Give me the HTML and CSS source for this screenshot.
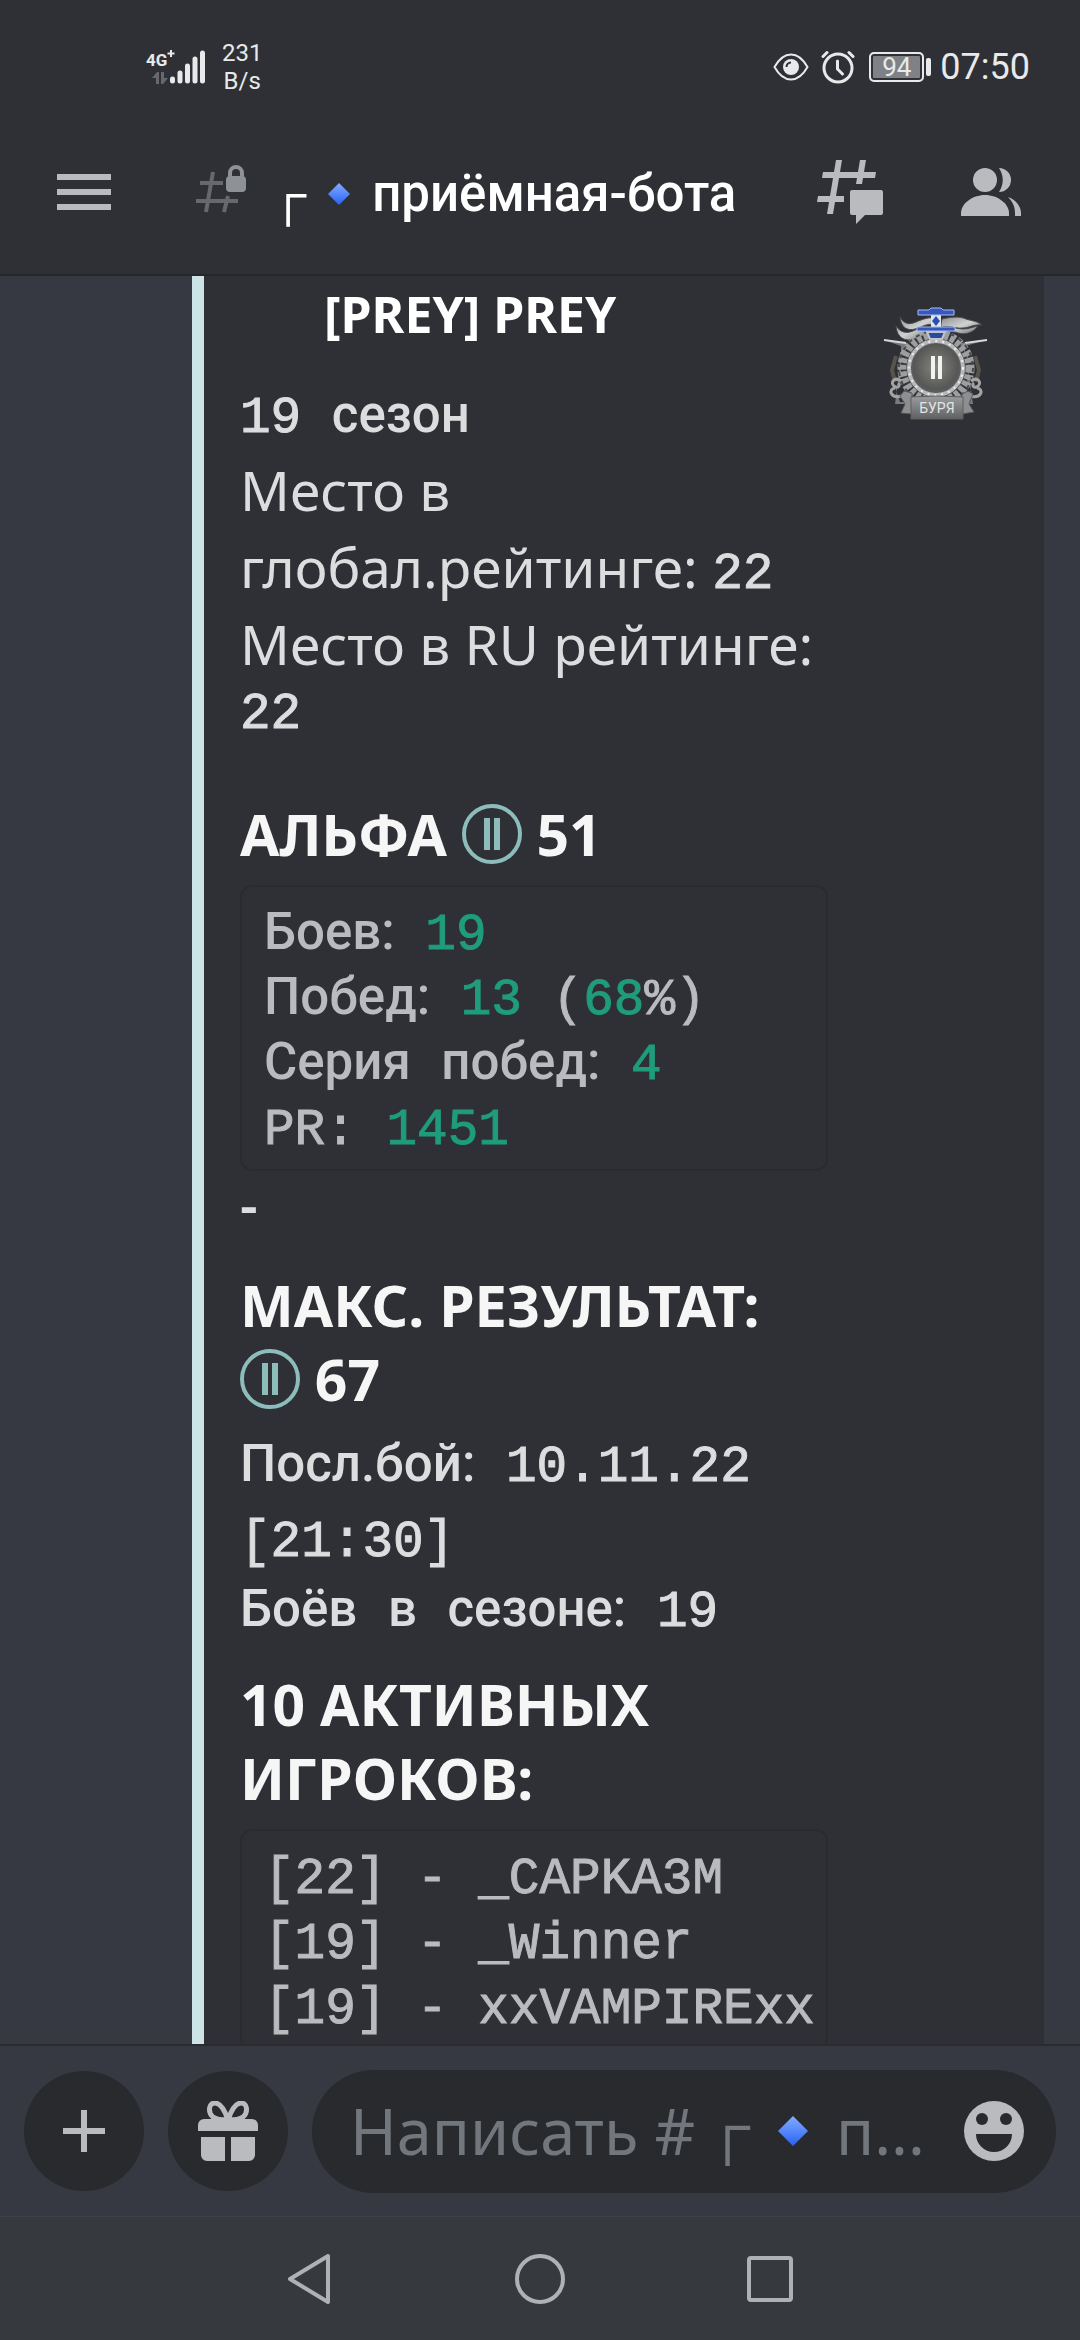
FILE: index.html
```html
<!DOCTYPE html>
<html lang="ru">
<head>
  <meta charset="UTF-8">
  <meta name="viewport" content="width=device-width, initial-scale=1">
  <title>приёмная-бота</title>
  <link rel="stylesheet" href="styles.css">
</head>
<body>

  <!-- STATUS BAR -->
  <div class="status-bar">
    <svg class="signal" viewBox="0 0 60 36" width="60" height="36">
      <text class="signal-net" x="0" y="17">4G</text>
      <path d="M25 1v7M21.500 4.500h7" stroke="#e8e9ea" stroke-width="2"/>
      <path d="M6 29l5-6h2v12h-3v-6zM15 23h3v6h4l-5 6h-2z" fill="#66686d"/>
      <g stroke="#e8e9ea" stroke-width="5" stroke-linecap="round">
        <path d="M26.500 30v2M34 24v8M41.500 17v15M49 10v22M56.500 4v28"/>
      </g>
    </svg>
    <div class="net-speed">231<br>B/s</div>
    <div class="status-right">
      <svg viewBox="0 0 36 28" width="36" height="28" fill="none">
        <path d="M1.500 14C6 6 12 1.500 18 1.500S30 6 34.500 14C30 22 24 26.500 18 26.500S6 22 1.500 14z" stroke="#e8e9ea" stroke-width="2"/>
        <circle cx="18" cy="14" r="8" fill="#e8e9ea"/>
        <path d="M13.500 14a4.500 4.500 0 0 1 4.500-4.500" stroke="#2f3035" stroke-width="2"/>
      </svg>
      <svg class="alarm" viewBox="0 0 34 34" width="34" height="34" fill="none" stroke="#e8e9ea" stroke-linecap="round">
        <circle cx="17" cy="18" r="14" stroke-width="3"/>
        <path d="M16.500 11v8l5 5" stroke-width="3"/>
        <path d="M2 6.500l4-4M28 2.500l4 4" stroke-width="3"/>
      </svg>
      <div class="battery">94</div>
      <time class="clock">07:50</time>
    </div>
  </div>

  <!-- CHANNEL HEADER -->
  <header class="toolbar">
    <button class="icon-btn" type="button" aria-label="Меню">
      <svg viewBox="0 0 54 36" width="54" height="36" fill="#b9bbbf">
        <path d="M0 0h54v6H0zM0 15h54v6H0zM0 30h54v6H0z"/>
      </svg>
    </button>
    <svg class="channel-icon" viewBox="0 0 50 54" width="50" height="54">
      <path d="M4 18h23M0 36h42M17 7l-7 40M32 31l-4 16" stroke="#66686d" stroke-width="4" fill="none"/>
      <path d="M34 12V8a6 6 0 0 1 12 0v4" stroke="#8e9196" stroke-width="4" fill="none"/>
      <rect x="30" y="11" width="20" height="16" rx="4" fill="#8e9196"/>
    </svg>
    <h1 class="channel-name">
      <span>┌</span>
      <svg class="diamond" viewBox="0 0 22 22"><path d="M11 0l11 11-11 11L0 11z" fill="url(#blue)"/></svg>
      <span>приёмная-бота</span>
    </h1>
    <button class="icon-btn" type="button" aria-label="Ветки">
      <svg viewBox="0 0 66 64" width="66" height="64" fill="#b9bbbf">
        <path d="M6 12h53l-1 6H5zM1 36h26v6H0zM19 0h6l-9 54h-6zM43 0h6l-4 24h-6z"/>
        <path d="M35 30h29a2 2 0 0 1 2 2v21a2 2 0 0 1-2 2H48l-9 9v-9h-4a2 2 0 0 1-2-2V32a2 2 0 0 1 2-2z"/>
      </svg>
    </button>
    <button class="icon-btn members-btn" type="button" aria-label="Участники">
      <svg viewBox="0 0 60 48" width="60" height="48" fill="#b9bbbf">
        <circle cx="24" cy="12" r="12"/>
        <path d="M0 48v-3c0-9 11-18 24-18s24 9 24 18v3z"/>
        <path d="M38 0a12 12 0 0 1 0 24c5-8 5-16 0-24zM47 29c8 3 13 9 13 16v3h-6v-3c0-6-2-11-7-16z"/>
      </svg>
    </button>
  </header>

  <!-- MESSAGES -->
  <main class="messages">
    <article class="embed">
      <div class="embed-body">
        <h2 class="embed-title">[PREY] PREY</h2>

        <div class="mono-line">19 <span class="ru">сезон</span></div>
        <div class="text-line">Место в глобал.рейтинге: <span class="mono">22</span></div>
        <div class="text-line">Место в RU рейтинге:</div>
        <div class="mono-line">22</div>

        <h3 class="field-title alpha-title">АЛЬФА
          <svg class="league" viewBox="0 0 60 60"><use href="#league-two"/></svg>
          51</h3>
        <pre class="code"><span class="ru">Боев:</span> <b>19</b>
<span class="ru">Побед:</span> <b>13</b> (<b>68</b>%)
<span class="ru">Серия</span> <span class="ru">побед:</span> <b>4</b>
PR: <b>1451</b></pre>
        <div class="text-line dash">-</div>

        <h3 class="field-title max-title">МАКС. РЕЗУЛЬТАТ:<br>
          <svg class="league" viewBox="0 0 60 60"><use href="#league-two"/></svg>
          67</h3>
        <div class="mono-line tall"><span class="ru">Посл.бой:</span> 10.11.22<br>[21:30]</div>
        <div class="mono-line"><span class="ru">Боёв</span> <span class="ru">в</span> <span class="ru">сезоне:</span> 19</div>

        <h3 class="field-title players-title">10 АКТИВНЫХ ИГРОКОВ:</h3>
        <pre class="code">[22] - _CAPKA3M
[19] - _Winner
[19] - xxVAMPIRExx
</pre>
      </div>

      <!-- Clan league badge -->
      <svg class="badge" viewBox="0 0 150 150" width="150" height="150">
        <path d="M24 50l24 3-3 10-5-1-1 22-4 30h78l-4-30-1-22-5 1-3-10 27-3-22 6v30l6 14-4 12H40l-4-12 5-14V56z" fill="#77797b"/>
        <path d="M24 50l22 3M127 50l-22 3" stroke="#d5d7d8" stroke-width="2"/>
        <path d="M36 66l-4 14 3 12M115 66l4 14-3 12" stroke="#57534d" stroke-width="4" fill="none"/>
        <path d="M40 27c4 7 9 8 16 5s13-5 18-4v7c-7-2-12 2-19 4s-14-1-15-12zM36 36c4 6 10 8 17 5 8-4 15-4 21-1v6c-8-2-13 0-20 3-9 3-17-1-18-13z" fill="url(#steel)" stroke="#494b4d"/>
        <path d="M82 29c9-2 17-3 24 0 6 2 11 2 16 6-8-1-13 3-19 3-8 1-14-3-22 0v-4zM82 37c8-2 14 2 21 2 6 0 9-2 15-3-5 7-13 9-20 7-6-2-11-3-17 1z" fill="url(#steel)" stroke="#494b4d"/>
        <circle cx="76" cy="78" r="33" fill="#3d3e40"/>
        <circle cx="76" cy="78" r="34" fill="none" stroke="#9c9e9f" stroke-width="9" stroke-dasharray="5 2"/>
        <circle cx="76" cy="78" r="37" fill="none" stroke="#47494b" stroke-width="2" stroke-dasharray="4 5"/>
        <circle cx="76" cy="78" r="27" fill="#595b5c" stroke="#b6b8b9" stroke-width="4"/>
        <circle cx="76" cy="78" r="27" fill="none" stroke="#eceded" stroke-width="2" stroke-dasharray="2 5"/>
        <circle cx="76" cy="77" r="23" fill="url(#dial)"/>
        <path d="M71 66h4v23h-4zM78 66h4v23h-4z" fill="#f3f3ee"/>
        <g fill="none" stroke="#a1a3a4" stroke-width="3">
          <path d="M41 91c-7-5-11 2-7 5s7-1 4-3M42 106c-12 3-14-7-7-8M111 91c7-5 11 2 7 5s-7-1-4-3M110 106c12 3 14-7 7-8"/>
        </g>
        <path d="M71 24h10v15H71z" fill="#e2e6ea"/>
        <path d="M76 26l4 5-4 5-4-5z" fill="#294fb2"/>
        <path d="M58 20h11l2-2h10l2 2h11v5H58zM57 37h38v4H57z" fill="#3657bd" stroke="#a9bcf0"/>
        <path d="M67 42h18l-3 7H70z" fill="#2d489f" stroke="#bfc4cb" stroke-width="2"/>
        <path d="M44 101l8 2v21l-11-1 4-9-5-8zM108 101l-6 3v20l12-2-5-8 4-10z" fill="#8c8e8f" stroke="#555759"/>
        <path d="M51 107q25-2 52 0v22H51z" fill="url(#plate)" stroke="#5d5f61"/>
        <text class="badge-text" x="77" y="123" text-anchor="middle">БУРЯ</text>
      </svg>
    </article>
  </main>

  <!-- COMPOSER -->
  <form class="composer">
    <button class="round-btn" type="button" aria-label="Прикрепить">
      <svg viewBox="0 0 42 42" width="42" height="42" fill="#b9bbbf"><path d="M18 0h6v18h18v6H24v18h-6V24H0v-6h18z"/></svg>
    </button>
    <button class="round-btn" type="button" aria-label="Подарок">
      <svg viewBox="0 0 60 60" width="60" height="60" fill="#b9bbbf">
        <path d="M30 19c-3-9-7-17-13-17-7 0-7 10-2 14 4 3 10 3 15 3zM30 19c3-9 7-17 13-17 7 0 7 10 2 14-4 3-10 3-15 3z" fill="none" stroke="#b9bbbf" stroke-width="5"/>
        <path d="M6 18h48a6 6 0 0 1 6 6v6H0v-6a6 6 0 0 1 6-6zM3 36h24v24H9a6 6 0 0 1-6-6zM33 36h24v18a6 6 0 0 1-6 6H33z"/>
      </svg>
    </button>
    <div class="field">
      <input id="message" type="text">
      <label class="placeholder" for="message">
        <span>Написать #</span>
        <span class="corner">┌</span>
        <svg class="diamond" viewBox="0 0 22 22"><path d="M11 0l11 11-11 11L0 11z" fill="url(#blue)"/></svg>
        <span>п...</span>
      </label>
      <button class="icon-btn" type="button" aria-label="Эмодзи">
        <svg viewBox="0 0 60 60" width="60" height="60">
          <circle cx="30" cy="30" r="30" fill="#b9bbbf"/>
          <g fill="#292a2e">
            <circle cx="18" cy="18" r="6"/>
            <circle cx="42" cy="18" r="6"/>
            <path d="M12 33h36a18 18 0 0 1-36 0z"/>
          </g>
        </svg>
      </button>
    </div>
  </form>

  <!-- SYSTEM NAVIGATION -->
  <nav class="system-nav">
    <button class="icon-btn" type="button" aria-label="Назад">
      <svg viewBox="0 0 50 50" width="50" height="50"><path d="M43 2L5 25l38 23z"/></svg>
    </button>
    <button class="icon-btn" type="button" aria-label="Домой">
      <svg viewBox="0 0 50 50" width="50" height="50"><circle cx="25" cy="25" r="23"/></svg>
    </button>
    <button class="icon-btn" type="button" aria-label="Недавние">
      <svg viewBox="0 0 50 50" width="50" height="50"><rect x="4" y="4" width="42" height="42" rx="2"/></svg>
    </button>
  </nav>

  <!-- Shared shapes and gradients -->
  <svg class="defs" width="0" height="0">
    <defs>
      <linearGradient id="blue" x1="0" y1="0" x2="0" y2="1">
        <stop offset="0" stop-color="#82adff"/>
        <stop offset="1" stop-color="#2962f5"/>
      </linearGradient>
      <linearGradient id="steel" x1="0" y1="0" x2="1" y2="1">
        <stop offset="0" stop-color="#8d8f90"/>
        <stop offset="0.500" stop-color="#d0d1d1"/>
        <stop offset="1" stop-color="#626465"/>
      </linearGradient>
      <linearGradient id="plate" x1="0" y1="0" x2="0" y2="1">
        <stop offset="0" stop-color="#9a9c9d"/>
        <stop offset="1" stop-color="#5f6162"/>
      </linearGradient>
      <radialGradient id="dial">
        <stop offset="0" stop-color="#858481"/>
        <stop offset="1" stop-color="#555553"/>
      </radialGradient>
      <g id="league-two">
        <circle cx="30" cy="30" r="28" fill="none" stroke="#8dbdbb" stroke-width="4"/>
        <path d="M22 14h6v32h-6zM32 14h6v32h-6z" fill="#8dbdbb"/>
      </g>
    </defs>
  </svg>

</body>
</html>
```

FILE: styles.css
```css
/* ---------- BASE ---------- */
* {
  margin: 0;
  padding: 0;
  box-sizing: border-box;
}
body {
  display: flex;
  flex-direction: column;
  height: 100vh;
  overflow: hidden;
  background: #363941;
  color: #dcddde;
  font-family: "Noto Sans", "Open Sans", sans-serif;
}
svg {
  display: block;
  flex: none;
}
button {
  flex: none;
  border: none;
  background: none;
  cursor: pointer;
}
.defs {
  position: absolute;
}

/* ---------- STATUS BAR ---------- */
.status-bar {
  display: flex;
  align-items: center;
  height: 108px;
  padding: 26px 50px 0 146px;
  background: #2f3035;
  color: #e8e9ea;
  font-family: Roboto, sans-serif;
}
.signal {
  overflow: visible;
}
.signal-net {
  font-size: 17px;
  font-weight: 700;
  fill: #e8e9ea;
}
.net-speed {
  margin-left: 16px;
  font-size: 24px;
  line-height: 28px;
  text-align: center;
}
.status-right {
  display: flex;
  align-items: center;
  margin-left: auto;
}
.alarm {
  margin: 0 14px 0 12px;
}
.battery {
  position: relative;
  width: 55px;
  height: 30px;
  border: 2px solid #e8e9ea;
  border-radius: 5px;
  background: #808186;
  box-shadow: inset 0 0 0 2px #2f3035;
  font-size: 26px;
  line-height: 26px;
  text-align: center;
}
.battery::after {
  content: "";
  position: absolute;
  top: 4px;
  right: -9px;
  width: 5px;
  height: 18px;
  border-radius: 2px;
  background: #e8e9ea;
}
.clock {
  margin-left: 16px;
  font-size: 36px;
  line-height: 40px;
}

/* ---------- CHANNEL HEADER ---------- */
.toolbar {
  display: flex;
  align-items: center;
  height: 168px;
  padding: 2px 59px 0 57px;
  background: #2f3035;
  border-bottom: 2px solid #26272b;
}
.channel-icon {
  margin: 0 24px 0 85px;
}
.channel-name {
  display: flex;
  flex: 1;
  align-items: center;
  gap: 22px;
  padding-top: 4px;
  color: #fff;
  font-family: Roboto, "Noto Sans", sans-serif;
  font-size: 51px;
  font-weight: 500;
  line-height: 60px;
}
.diamond {
  width: 22px;
  height: 22px;
}
.members-btn {
  margin-left: 78px;
}

/* ---------- MESSAGES ---------- */
.messages {
  flex: 1;
  min-height: 0;
  overflow: hidden;
  padding: 0 36px 0 192px;
}
.embed {
  display: flex;
  gap: 32px;
  min-height: 100%;
  padding: 4px 34px 24px 36px;
  border-left: 12px solid #cce4e6;
  background: #2f3035;
}
.embed-body {
  flex: 1;
  min-width: 0;
}
.embed-title {
  margin: 0 0 38px 84px;
  color: #fff;
  font-size: 50px;
  line-height: 68px;
}
.text-line {
  font-size: 55px;
  line-height: 77px;
}
.mono-line,
.mono,
.code {
  font-family: "Liberation Mono", monospace;
  font-size: 51px;
  -webkit-text-stroke: 1px;
}
.mono,
.ru {
  line-height: 51px;
}
.mono-line {
  line-height: 65px;
}
.tall {
  margin-top: 14px;
  line-height: 75px;
}
.ru {
  font-family: Roboto, sans-serif;
  font-weight: 500;
  -webkit-text-stroke: 0;
}
.dash {
  font-weight: 600;
  line-height: 65px;
}
.field-title {
  color: #f6f6f7;
  font-size: 57px;
  line-height: 74px;
}
.alpha-title {
  margin-top: 50px;
}
.max-title {
  margin-top: 32px;
}
.players-title {
  margin-top: 22px;
}
.league {
  display: inline-block;
  width: 60px;
  height: 60px;
  vertical-align: -8px;
}
.code {
  margin-top: 14px;
  padding: 16px 0 6px 22px;
  border: 2px solid #2a2b2f;
  border-radius: 12px;
  color: #b9bbbe;
  line-height: 65px;
}
.code b {
  color: #1f9c7c;
  font-weight: 400;
}
.badge {
  margin-top: 10px;
}
.badge-text {
  fill: #e3e4e4;
  font-family: Roboto, sans-serif;
  font-size: 14px;
}

/* ---------- COMPOSER ---------- */
.composer {
  display: flex;
  align-items: center;
  gap: 24px;
  height: 172px;
  padding: 0 24px;
  border-top: 2px solid #2a2b2f;
  background: #363941;
}
.round-btn {
  display: flex;
  align-items: center;
  justify-content: center;
  width: 120px;
  height: 120px;
  border-radius: 50%;
  background: #292a2e;
}
.field {
  position: relative;
  display: flex;
  flex: 1;
  align-items: center;
  min-width: 0;
  height: 123px;
  padding: 0 32px 0 38px;
  border-radius: 62px;
  background: #292a2e;
}
.field input {
  flex: 1;
  min-width: 0;
  height: 100%;
  border: none;
  outline: none;
  background: transparent;
  color: #dcddde;
  font-family: inherit;
  font-size: 63px;
}
.placeholder {
  position: absolute;
  left: 38px;
  display: flex;
  align-items: center;
  color: #72767d;
  font-size: 63px;
  line-height: 86px;
  white-space: nowrap;
  pointer-events: none;
}
.corner {
  padding: 0 0 16px 10px;
}
.placeholder .diamond {
  width: 30px;
  height: 30px;
  margin: 0 28px;
}

/* ---------- SYSTEM NAVIGATION ---------- */
.system-nav {
  display: flex;
  align-items: center;
  justify-content: center;
  gap: 180px;
  height: 124px;
  border-top: 1px solid #3d4045;
  background: #36393d;
}
.system-nav svg {
  fill: none;
  stroke: #b0b1b4;
  stroke-width: 4;
  stroke-linejoin: round;
}
```
